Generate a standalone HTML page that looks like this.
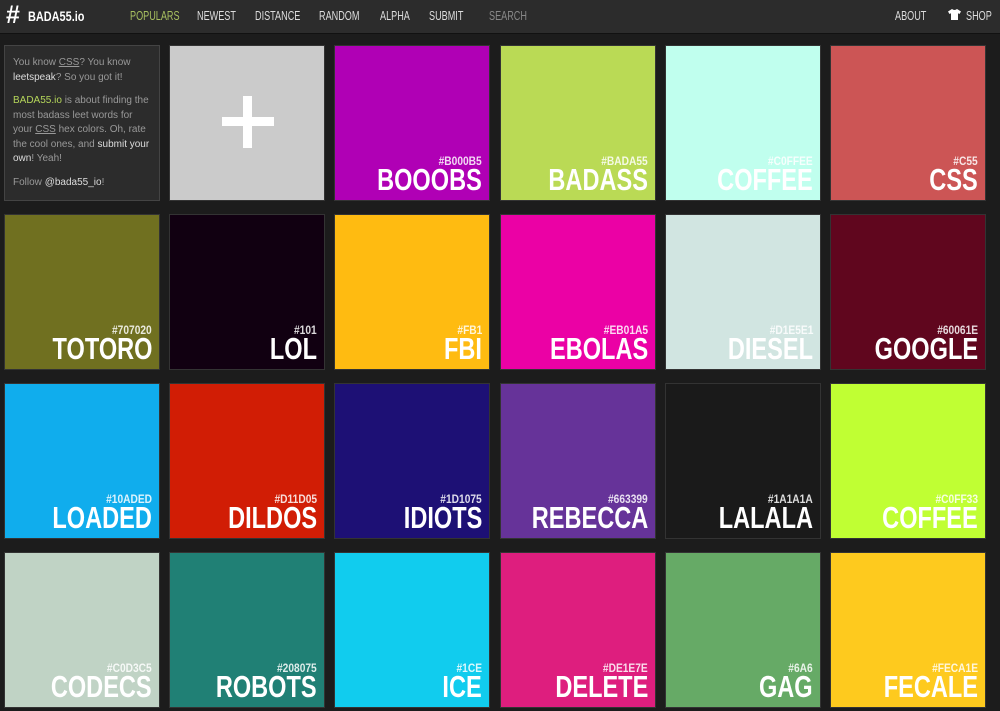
<!DOCTYPE html>
<html><head><meta charset="utf-8"><style>
*{margin:0;padding:0;box-sizing:border-box}
body{width:1000px;height:711px;background:#1c1c1c;overflow:hidden;font-family:"Liberation Sans",sans-serif}
.hdr{position:absolute;left:0;top:0;width:1000px;height:34px;background:#2c2c2c;border-bottom:1px solid #111}
.n{position:absolute;top:8px;font-size:13px;color:#ddd;transform:scaleX(.7);transform-origin:left;white-space:nowrap}
.logo{position:absolute;left:6px;top:1px;font:bold 25px "Liberation Sans",sans-serif;color:#fff}
.lt{position:absolute;left:28px;top:8px;font:bold 14px "Liberation Sans",sans-serif;color:#fff;transform:scaleX(.78);transform-origin:left}
.t{position:absolute;width:156px;height:156px;border:1px solid #333}
.t .h{position:absolute;right:7px;bottom:32px;font:bold 12px "Liberation Sans",sans-serif;color:rgba(255,255,255,.85);transform:scaleX(.85);transform-origin:right;white-space:nowrap}
.t .w{position:absolute;right:7px;bottom:3px;font:bold 31px "Liberation Sans",sans-serif;color:#fff;line-height:34px;transform:scaleX(.76);transform-origin:right;white-space:nowrap}
.info{position:absolute;left:4px;top:45px;width:156px;height:156px;background:#2c2c2c;border:1px solid #444;padding:10px 8px;font-size:10px;line-height:14.5px;color:#999}
.info p{margin-bottom:9px}.info b{color:#ddd;font-weight:normal}.info u{text-decoration:underline}
</style></head><body>
<div class="hdr">
<div class="logo">#</div><div class="lt">BADA55.io</div>
<div class="n" style="left:130px;color:#a8c060">POPULARS</div>
<div class="n" style="left:197px">NEWEST</div>
<div class="n" style="left:255px">DISTANCE</div>
<div class="n" style="left:319px">RANDOM</div>
<div class="n" style="left:380px">ALPHA</div>
<div class="n" style="left:429px">SUBMIT</div>
<div class="n" style="left:489px;color:#888">SEARCH</div>
<div class="n" style="left:895px">ABOUT</div>
<svg style="position:absolute;left:948px;top:9px" width="13" height="11" viewBox="0 0 13 11"><path d="M4 0 L0 2.5 L1.5 5 L3 4.2 L3 11 L10 11 L10 4.2 L11.5 5 L13 2.5 L9 0 Q6.5 2 4 0Z" fill="#fff"/></svg>
<div class="n" style="left:966px">SHOP</div>
</div>
<div class="info"><p>You know <u>CSS</u>? You know <b>leetspeak</b>? So you got it!</p><p><span style="color:#b5d65a">BADA55.io</span> is about finding the most badass leet words for your <u>CSS</u> hex colors. Oh, rate the cool ones, and <b>submit your own</b>! Yeah!</p><p>Follow <b>@bada55_io</b>!</p></div>
<div class="t" style="left:169px;top:45px;background:#cbcbcb"><div style="position:absolute;left:52px;top:71px;width:52px;height:9px;background:#fff"></div><div style="position:absolute;left:73px;top:50px;width:9px;height:52px;background:#fff"></div></div>
<div id="g"></div>
<script>
var d=[
[334,45,"#B000B5","#B000B5","BOOOBS"],[500,45,"#BADA55","#BADA55","BADASS"],[665,45,"#C0FFEE","#C0FFEE","COFFEE"],[830,45,"#CC5555","#C55","CSS"],
[4,214,"#707020","#707020","TOTORO"],[169,214,"#110011","#101","LOL"],[334,214,"#FFBB11","#FB1","FBI"],[500,214,"#EB01A5","#EB01A5","EBOLAS"],[665,214,"#D1E5E1","#D1E5E1","DIESEL"],[830,214,"#60061E","#60061E","GOOGLE"],
[4,383,"#10ADED","#10ADED","LOADED"],[169,383,"#D11D05","#D11D05","DILDOS"],[334,383,"#1D1075","#1D1075","IDIOTS"],[500,383,"#663399","#663399","REBECCA"],[665,383,"#1A1A1A","#1A1A1A","LALALA"],[830,383,"#C0FF33","#C0FF33","COFFEE"],
[4,552,"#C0D3C5","#C0D3C5","CODECS"],[169,552,"#208075","#208075","ROBOTS"],[334,552,"#11CCEE","#1CE","ICE"],[500,552,"#DE1E7E","#DE1E7E","DELETE"],[665,552,"#66AA66","#6A6","GAG"],[830,552,"#FECA1E","#FECA1E","FECALE"]];
var h="";d.forEach(function(a){h+='<div class="t" style="left:'+a[0]+'px;top:'+a[1]+'px;background:'+a[2]+'"><div class="h">'+a[3]+'</div><div class="w">'+a[4]+'</div></div>'});
document.getElementById("g").innerHTML=h;
</script>
</body></html>
